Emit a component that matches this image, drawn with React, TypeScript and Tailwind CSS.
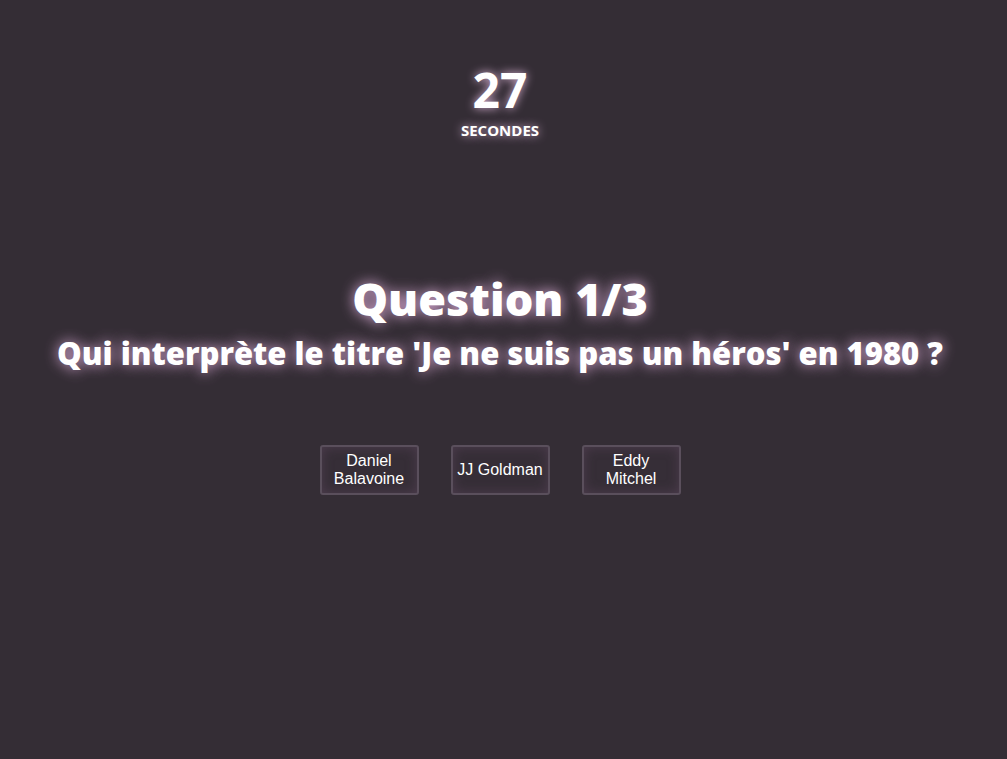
export default function App() {
  const answers = ['Daniel Balavoine', 'JJ Goldman', 'Eddy Mitchel'];
  return (
    <div className="min-h-screen w-full bg-[#342d35] flex flex-col items-center pr-[7px] text-white font-['Open_Sans',sans-serif]">
      {/* Timer */}
      <div className="mt-[62px] flex flex-col items-center [text-shadow:0_0_10px_rgba(255,210,250,0.8)]">
        <div className="text-[48px] font-bold leading-[56px]">27</div>
        <div className="text-[15px] font-bold leading-[20px] mt-[2px]">SECONDES</div>
      </div>

      {/* Question */}
      <div className="mt-[131px] flex flex-col items-center [text-shadow:0_0_14px_rgba(255,200,250,0.85)]">
        <h1 className="text-[45px] font-extrabold leading-[56px]">Question 1/3</h1>
        <h2 className="text-[31px] font-extrabold leading-[44px] mt-[4px]">
          Qui interprète le titre 'Je ne suis pas un héros' en 1980 ?
        </h2>
      </div>

      {/* Answers */}
      <div className="mt-[70px] flex gap-[32px]">
        {answers.map((a) => (
          <button
            key={a}
            className="w-[99px] h-[50px] px-1 border-2 border-[#5a4f5c] rounded-[3px] bg-[#362e37] text-white text-[16px] leading-[18px] font-['Liberation_Sans',Arial,sans-serif] shadow-[inset_0_0_12px_rgba(120,90,120,0.35)]"
          >
            {a}
          </button>
        ))}
      </div>
    </div>
  );
}
